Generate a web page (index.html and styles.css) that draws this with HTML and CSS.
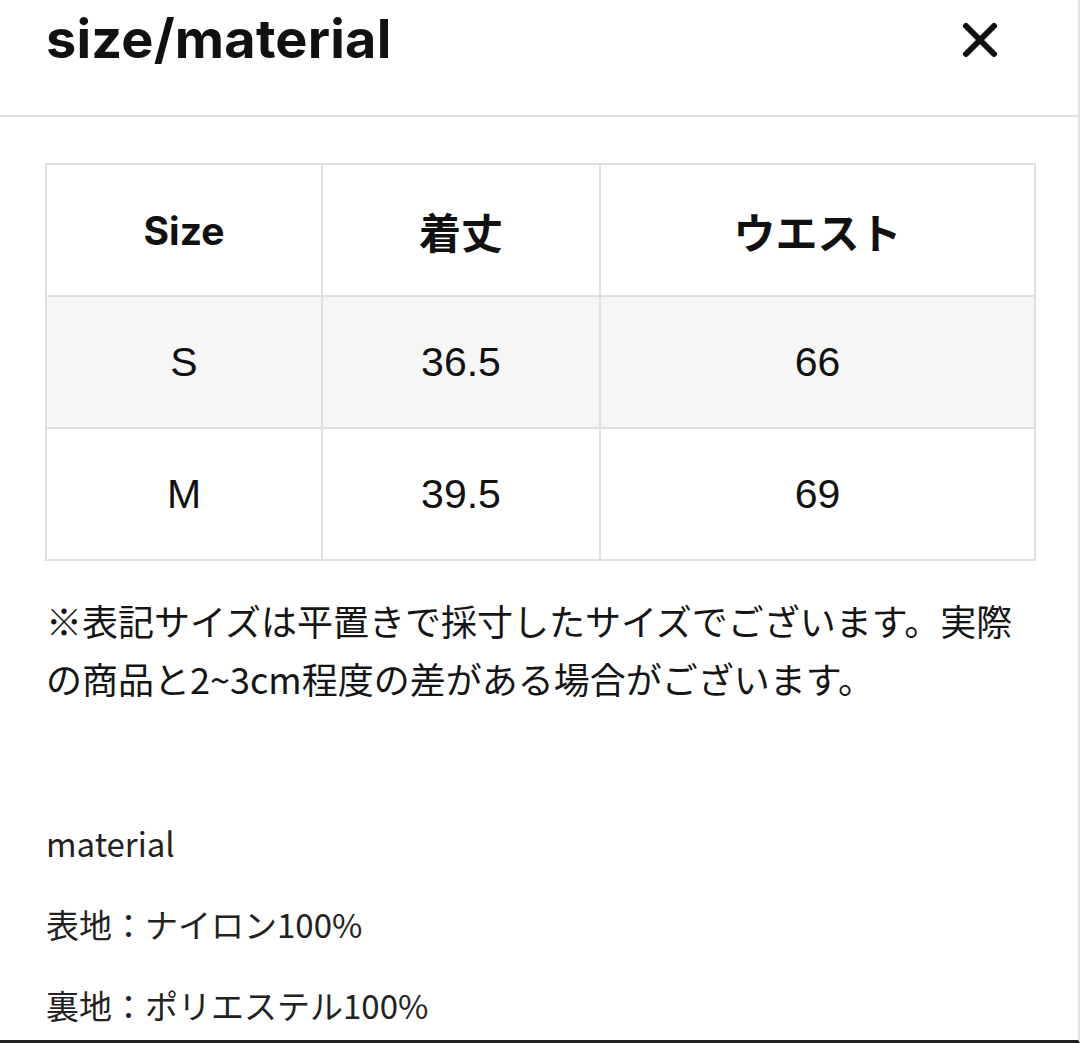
FILE: index.html
```html
<!DOCTYPE html>
<html lang="ja">
<head>
<meta charset="utf-8">
<link rel="stylesheet" href="styles.css">
</head>
<body>
<div class="page">
  <header class="head">
    <h1 class="title">size/material</h1>
    <button class="close" aria-label="close">
      <svg width="36" height="36" viewBox="0 0 36 36"><path d="M4 4 L32 32 M32 4 L4 32" stroke="#111" stroke-width="6" stroke-linecap="round"/></svg>
    </button>
  </header>
  <main class="content">
    <table class="sizes">
      <thead>
        <tr><th>Size</th><th class="ja">着丈</th><th class="ja">ウエスト</th></tr>
      </thead>
      <tbody>
        <tr class="alt"><td>S</td><td>36.5</td><td>66</td></tr>
        <tr><td>M</td><td>39.5</td><td>69</td></tr>
      </tbody>
    </table>
    <p class="note">※表記サイズは平置きで採寸したサイズでございます。実際の商品と2~3cm程度の差がある場合がございます。</p>
    <div class="material">
      <p class="mline">material</p>
      <p class="mline">表地：ナイロン100%</p>
      <p class="mline">裏地：ポリエステル100%</p>
    </div>
  </main>
</div>
</body>
</html>
```
FILE: styles.css
```css
html, body {
  margin: 0;
  padding: 0;
  background: #fff;
}
.page {
  width: 1078px;
  height: 1040px;
  border-right: 2px solid #e2e2e2;
  border-bottom: 3px solid #222;
  overflow: hidden;
  color: #111;
  font-family: "Liberation Sans", "Noto Sans CJK JP", sans-serif;
}
.head {
  height: 115px;
  border-bottom: 2px solid #e0e0e0;
  display: flex;
  align-items: flex-start;
  justify-content: space-between;
  padding: 0 80px 0 46px;
}
.title {
  margin: 6px 0 0;
  font-family: "Inter", "Liberation Sans", sans-serif;
  font-weight: 700;
  font-size: 54px;
  line-height: 66px;
  letter-spacing: 0.2px;
}
.close {
  margin-top: 22px;
  border: 0;
  background: none;
  padding: 0;
  width: 36px;
  height: 36px;
}
.close svg { display: block; }
.content {
  padding: 46px 44px 0 45px;
}
.sizes {
  width: 991px;
  border-collapse: collapse;
  border: 2px solid #e0e0e0;
  table-layout: fixed;
}
.sizes th, .sizes td {
  border: 2px solid #e0e0e0;
  height: 130px;
  text-align: center;
  vertical-align: middle;
  padding: 0;
}
.sizes th:nth-child(1) { width: 274px; }
.sizes th:nth-child(2) { width: 276px; }
.sizes th {
  font-family: "Inter", "Liberation Sans", sans-serif;
  font-weight: 700;
  font-size: 39px;
}
.sizes th.ja {
  font-family: "Noto Sans CJK JP", sans-serif;
  font-weight: 700;
  font-size: 42px;
}
.sizes td {
  font-size: 41px;
  font-weight: 400;
}
.sizes tr.alt td {
  background: #f6f6f6;
}
.note {
  margin: 30px 0 0 1px;
  font-family: "Noto Sans CJK JP", sans-serif;
  font-size: 36px;
  line-height: 58px;
  color: #151515;
}
.material {
  margin-top: 115px;
  padding-left: 1px;
  font-family: "Noto Sans CJK JP", sans-serif;
  color: #222;
}
.mline {
  margin: 0 0 39px;
  font-size: 33px;
  line-height: 42px;
}
```
